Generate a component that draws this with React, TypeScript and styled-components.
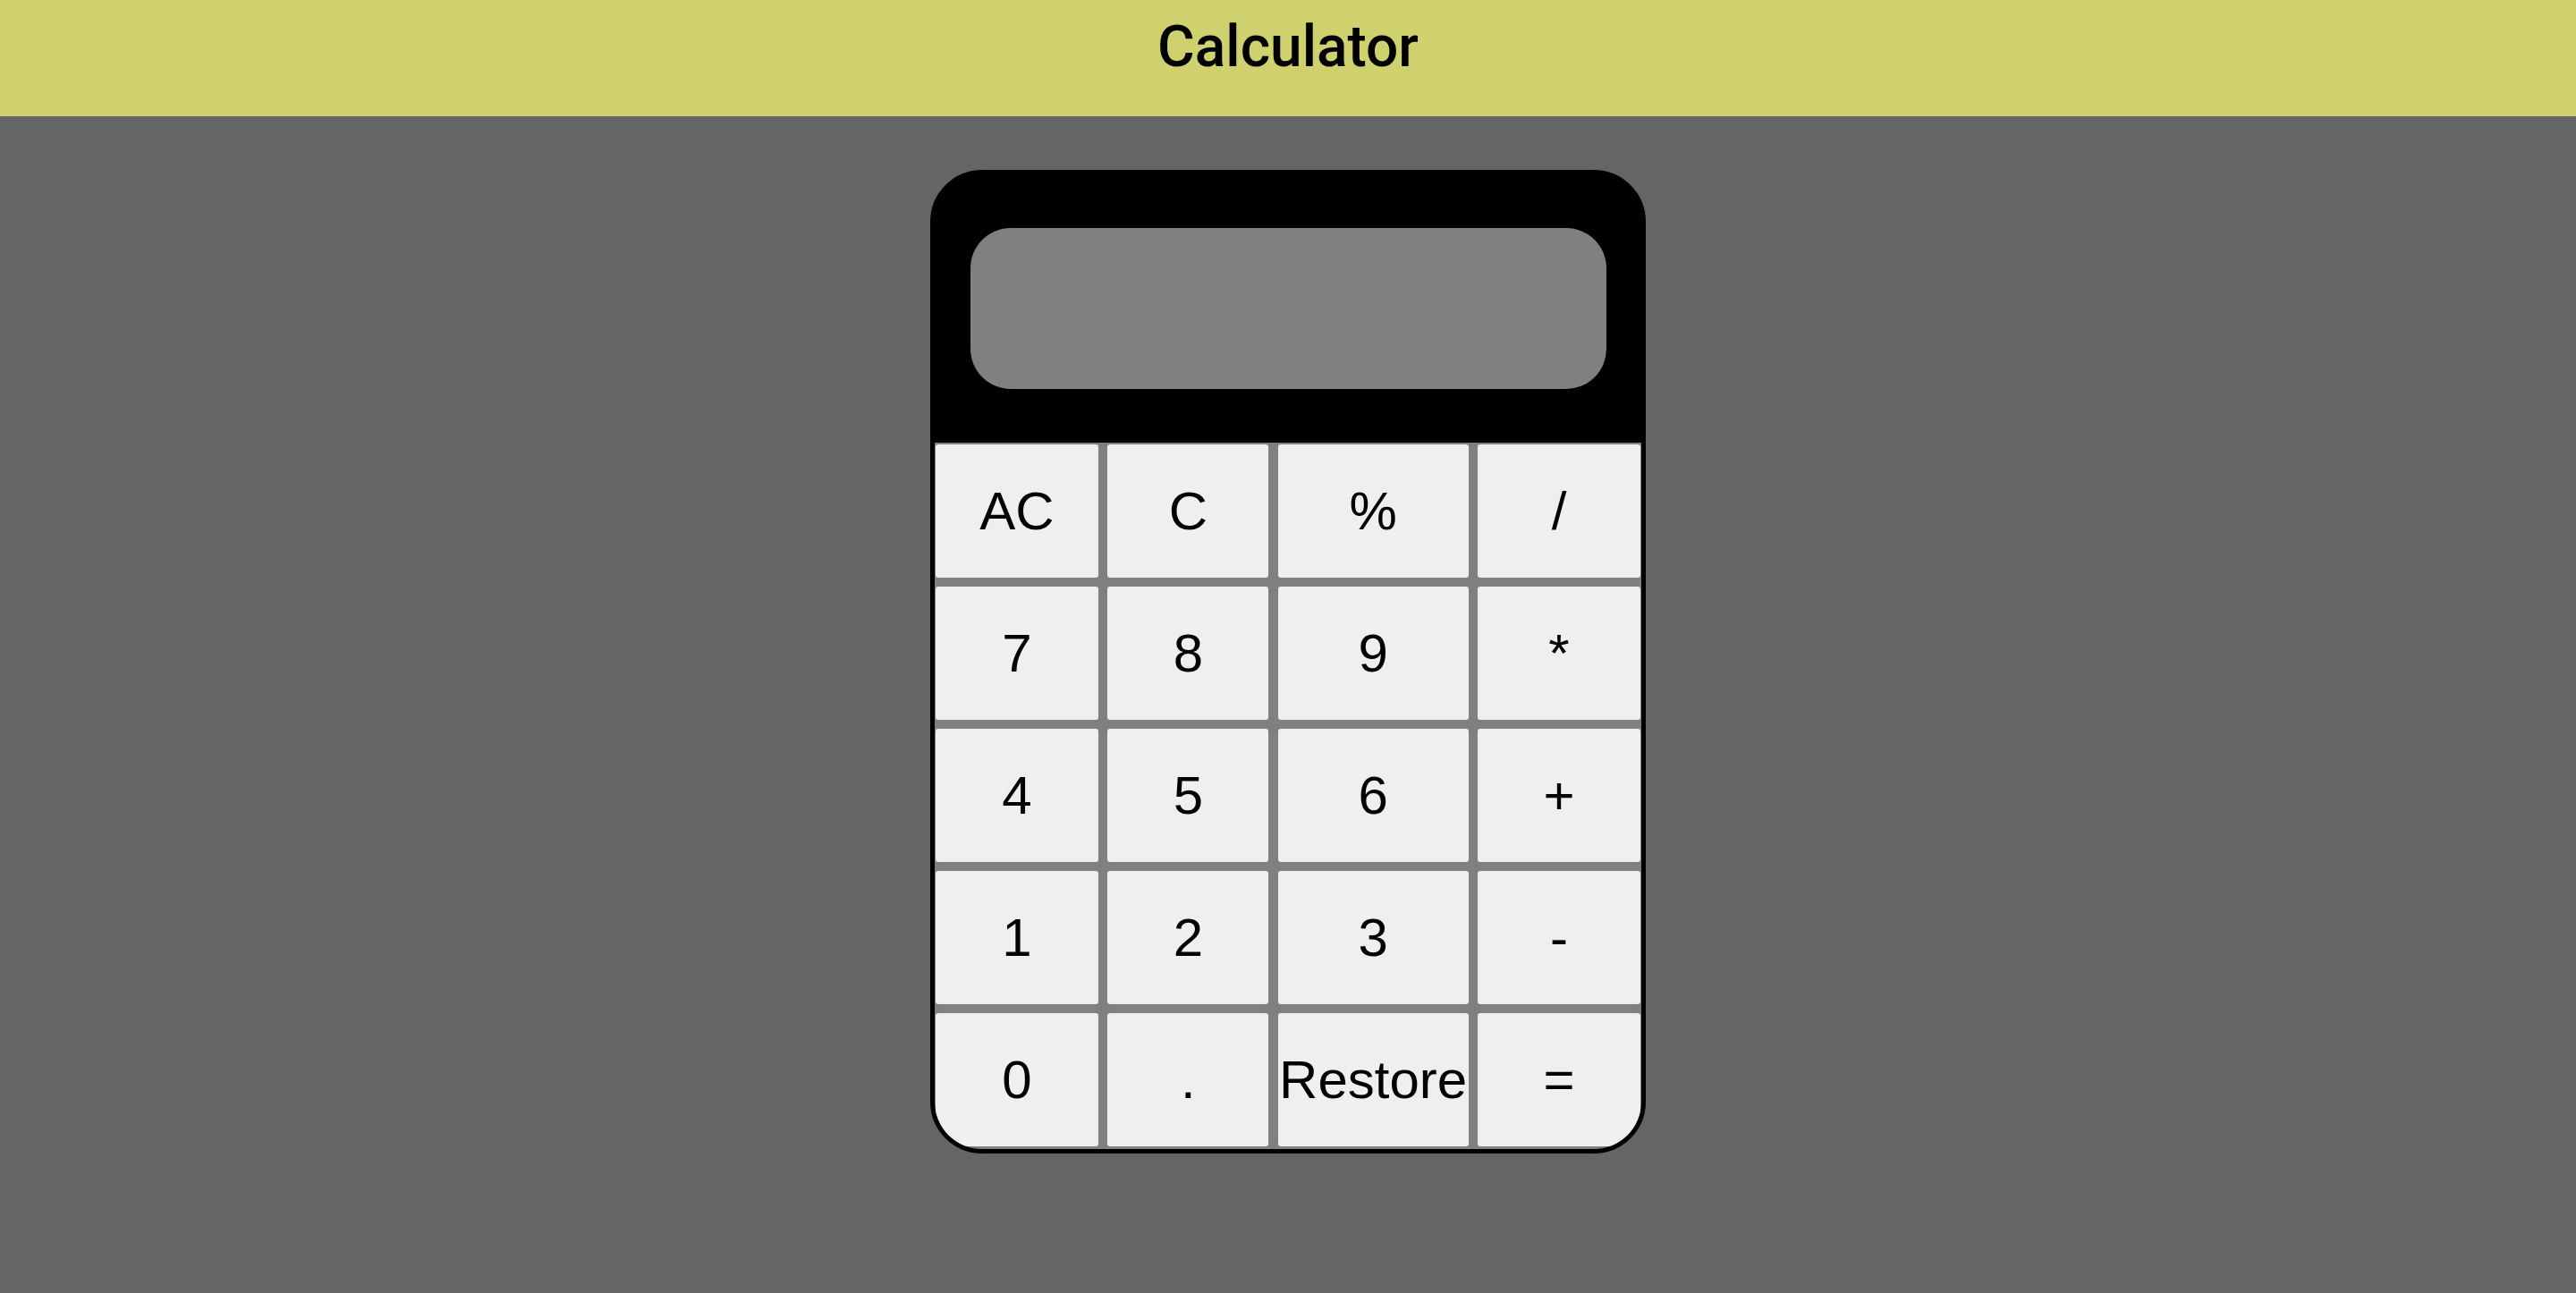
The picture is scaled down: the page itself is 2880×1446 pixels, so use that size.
import styled, { createGlobalStyle } from "styled-components";

const keys: string[][] = [
  ["AC", "C", "%", "/"],
  ["7", "8", "9", "*"],
  ["4", "5", "6", "+"],
  ["1", "2", "3", "-"],
  ["0", ".", "Restore", "="],
];

const App = (): JSX.Element => {
  return (
    <Page>
      <GlobalStyle />
      <Header>
        <Title>Calculator</Title>
      </Header>
      <Main>
        <Calculator>
          <Screen>
            <Display />
          </Screen>
          <Keypad>
            {keys.flat().map((k) => (
              <Key key={k}>{k}</Key>
            ))}
          </Keypad>
        </Calculator>
      </Main>
    </Page>
  );
};

export default App;

const GlobalStyle = createGlobalStyle`
  html, body {
    margin: 0;
    padding: 0;
    background: #656565;
  }
  * {
    box-sizing: border-box;
  }
`;

const Page = styled.div`
  min-height: 100vh;
  display: flex;
  flex-direction: column;
  background: #656565;
`;

const Header = styled.header`
  height: 130px;
  background: #cfd06e;
  display: flex;
  justify-content: center;
  align-items: flex-start;
  padding-top: 15px;
`;

const Title = styled.h1`
  margin: 0;
  font-family: Roboto, "Liberation Sans", sans-serif;
  font-size: 64px;
  font-weight: 500;
  line-height: 75px;
  color: #000;
`;

const Main = styled.main`
  flex: 1;
  display: flex;
  justify-content: center;
  padding-top: 60px;
`;

const Calculator = styled.div`
  width: 800px;
  height: 1100px;
  background: #000;
  border: 5px solid #000;
  border-radius: 58px;
  overflow: hidden;
  display: flex;
  flex-direction: column;
`;

const Screen = styled.div`
  padding: 60px 39px 60px 40px;
`;

const Display = styled.div`
  height: 180px;
  background: #808080;
  border-radius: 45px;
`;

const Keypad = styled.div`
  flex: 1;
  background: #808080;
  padding: 2px 1px 1px 1px;
  display: grid;
  grid-template-columns: 182px 180px 213px 182px;
  grid-auto-rows: 149px;
  row-gap: 10px;
  justify-content: space-between;
`;

const Key = styled.button`
  border: none;
  border-radius: 3px;
  background: #efefef;
  font-family: "Liberation Sans", Arial, sans-serif;
  font-size: 60px;
  color: #000;
  padding: 0;
  display: flex;
  align-items: center;
  justify-content: center;
  white-space: nowrap;
`;
